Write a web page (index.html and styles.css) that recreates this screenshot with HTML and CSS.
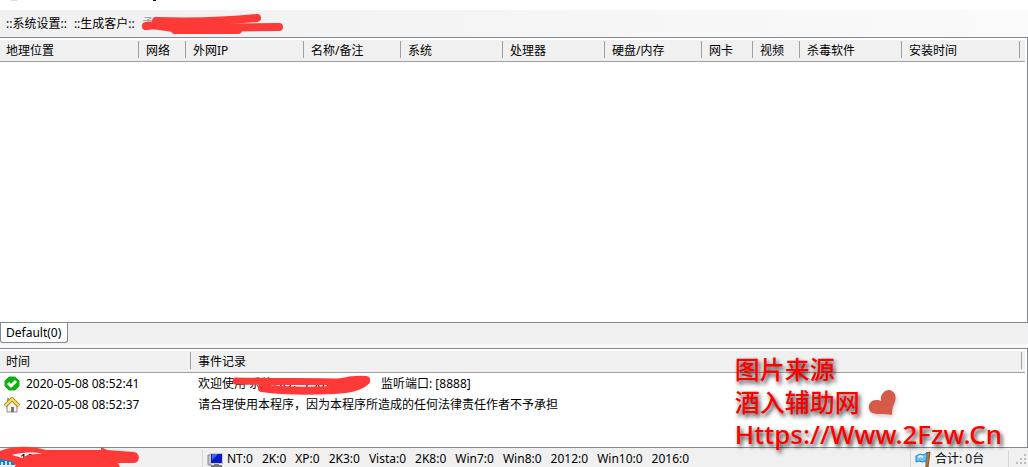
FILE: index.html
```html
<!DOCTYPE html>
<html lang="zh-CN">
<head>
    <meta charset="UTF-8">
    <meta name="viewport" content="width=device-width, initial-scale=1.0">
    <title>主机列表</title>
    <link rel="stylesheet" href="styles.css">
</head>
<body>
    <div class="titlebar">
        <svg class="title-edge" width="160" height="3" viewBox="0 0 160 3" aria-hidden="true">
            <path d="M11 0h6" stroke="#bbb"/>
            <path d="M153 0h3" stroke="#111" stroke-width="2"/>
        </svg>
    </div>
    <nav class="menu">
        <button type="button">::系统设置::</button>
        <button type="button">::生成客户::</button>
        <span class="menu-hidden">孟
            <svg class="scribble scribble-menu" width="142" height="22" viewBox="0 0 142 22" aria-hidden="true">
                <path d="M14 7 C45 8 85 7 115 4" stroke-width="8"/>
                <path d="M4 12 C16 10 24 14 34 14 L137 13" stroke-width="8"/>
                <path d="M33 16 L96 16" stroke-width="8"/>
            </svg>
        </span>
    </nav>

    <main class="list hosts">
        <table>
            <colgroup>
                <col class="w139"><col class="w47"><col class="w118"><col class="w97"><col class="w102"><col class="w102">
                <col class="w97"><col class="w51"><col class="w47"><col class="w102"><col class="w118"><col>
            </colgroup>
            <thead>
                <tr>
                    <th>地理位置</th>
                    <th>网络</th>
                    <th>外网IP</th>
                    <th>名称/备注</th>
                    <th>系统</th>
                    <th>处理器</th>
                    <th>硬盘/内存</th>
                    <th>网卡</th>
                    <th>视频</th>
                    <th>杀毒软件</th>
                    <th>安装时间</th>
                    <td></td>
                </tr>
            </thead>
        </table>
    </main>

    <div class="tabs">
        <button type="button" class="tab">Default(0)</button>
    </div>

    <section class="list events">
        <table>
            <colgroup>
                <col class="w191"><col><col class="w3">
            </colgroup>
            <thead>
                <tr>
                    <th>时间</th>
                    <th>事件记录</th>
                    <td></td>
                </tr>
            </thead>
            <tbody>
                <tr>
                    <td>
                        <div class="time">
                            <svg width="16" height="16" viewBox="0 0 16 16" aria-hidden="true">
                                <path d="M5 1h6l4 4v5l-4 4H5l-4-4V5z" fill="#0db30d" stroke="#0db30d" stroke-linejoin="round"/>
                                <path d="M4 7l3 3 5-5" fill="none" stroke="#fff" stroke-width="3"/>
                            </svg>
                            2020-05-08 08:52:41
                        </div>
                    </td>
                    <td>
                        <div class="message">
                            <span class="account">欢迎使用 系统QQ：75876 95
                                <svg class="scribble scribble-account" width="142" height="22" viewBox="0 0 142 22" aria-hidden="true">
                                    <path d="M4 8 C40 9 80 8 108 9" stroke-width="7"/>
                                    <path d="M30 15 C50 18 80 18 102 17 C118 16 128 14 134 8" stroke-width="8"/>
                                    <path d="M100 11 C115 8 122 6 134 7" stroke-width="8"/>
                                </svg>
                            </span>
                            <span>监听端口: [8888]</span>
                        </div>
                    </td>
                    <td></td>
                </tr>
                <tr>
                    <td>
                        <div class="time">
                            <svg width="16" height="16" viewBox="0 0 16 16" aria-hidden="true">
                                <path d="M3 8v7h10V8L8 4z" fill="#f4f4f4" stroke="#8a8a8a"/>
                                <path d="M7 10h3v5H7z" fill="#777"/>
                                <path d="M3 1h2v4H3z" fill="#999"/>
                                <path d="M1 9l7-7 7 7" fill="none" stroke="#a88a24" stroke-width="4"/>
                                <path d="M1 9l7-7 7 7" fill="none" stroke="#f7dd6a" stroke-width="2"/>
                            </svg>
                            2020-05-08 08:52:37
                        </div>
                    </td>
                    <td>请合理使用本程序，因为本程序所造成的任何法律责任作者不予承担</td>
                    <td></td>
                </tr>
            </tbody>
        </table>
    </section>

    <footer class="status">
        <div class="status-address">
            <svg width="16" height="16" viewBox="0 0 16 16" aria-hidden="true">
                <path d="M0 8h15v6H0z" fill="#1583c5"/>
                <path d="M1 11h2v3H1zM5 10h2v4H5zM9 11h2v3H9z" fill="#b9e6ff"/>
            </svg>
            192
            <svg class="scribble scribble-address" width="142" height="22" viewBox="0 0 142 22" aria-hidden="true">
                <path d="M0 6 C14 0 34 1 46 5 L101 5 L101 2 L107 5 L134 7 C141 8 140 18 134 18 L118 18 L120 22 L15 22 C18 17 8 15 0 14 Z M12 10 L22 13 C27 9 34 9 42 9 C34 6 18 8 12 10 Z" fill="#fd3a37" fill-rule="evenodd" stroke="none"/>
            </svg>
        </div>
        <div class="status-systems">
            <svg width="16" height="16" viewBox="0 0 16 16" aria-hidden="true">
                <path d="M1 4h3v10H1z" fill="#c4c4c4" stroke="#888"/>
                <path d="M3 2h13v11H3z" fill="#c9c9c9"/>
                <path d="M4 3h11v9H4z" fill="#0a1ac4"/>
                <path d="M5 3h6L5 9z" fill="#4668f4"/>
                <path d="M7 13h5v1h3v2H4v-2h3z" fill="#777"/>
            </svg>
            <span>NT:0</span>
            <span>2K:0</span>
            <span>XP:0</span>
            <span>2K3:0</span>
            <span>Vista:0</span>
            <span>2K8:0</span>
            <span>Win7:0</span>
            <span>Win8:0</span>
            <span>2012:0</span>
            <span>Win10:0</span>
            <span>2016:0</span>
        </div>
        <div class="status-total">
            <svg width="16" height="16" viewBox="0 0 16 16" aria-hidden="true">
                <path d="M11 2l4-1-2 15h-2z" fill="#b87931" stroke="#85511d"/>
                <path d="M1 5l4-2 3 1 4-2-1 8-4 1-3-1-3 1z" fill="#6bc3f5" stroke="#1e86cf"/>
                <path d="M3 6l3-1 2 1" fill="none" stroke="#d5f3ff" stroke-width="2"/>
            </svg>
            <span>合计: 0台</span>
        </div>
        <div class="status-grip">
            <svg width="12" height="12" viewBox="0 0 12 12" aria-hidden="true">
                <path d="M8 1h2v2H8zM4 5h2v2H4zM8 5h2v2H8zM0 9h2v2H0zM4 9h2v2H4zM8 9h2v2H8z" fill="#bcbcbc"/>
            </svg>
        </div>
    </footer>

    <div class="watermark">
        <div>图片来源</div>
        <div class="watermark-name">酒入辅助网
            <svg width="28" height="28" viewBox="0 0 28 28" aria-hidden="true">
                <path d="M24 26 C17 24 10 26 4 24 C-2 20 1 11 8 11 C10 11 12 11 13 12 C12 6 16 1 21 1 C28 2 29 9 26 15 C24 19 24 23 24 26Z" fill="#d65a4a"/>
            </svg>
        </div>
        <div class="watermark-url">Https://Www.2Fzw.Cn</div>
    </div>
</body>
</html>
```

FILE: styles.css
```css
* {
    box-sizing: border-box;
}
body {
    display: flex;
    flex-direction: column;
    position: relative;
    min-height: 100vh;
    margin: 0;
    background: #f0f0f0;
    color: #000;
    font-family: "Noto Sans", "Noto Sans CJK SC", sans-serif;
    font-size: 12px;
    line-height: 16px;
    white-space: nowrap;
    overflow: hidden;
}
svg {
    flex: none;
}
button {
    padding: 0;
    border: 0;
    background: none;
    color: inherit;
    font: inherit;
}
.titlebar {
    height: 10px;
    background: #fff;
}
.title-edge {
    display: block;
}

/* menu */
.menu {
    display: flex;
    align-items: center;
    gap: 7px;
    height: 27px;
    padding-left: 6px;
    background: linear-gradient(to right, #f0f0f0, #fafafa);
}
.menu-hidden {
    position: relative;
    color: #999;
}

/* red strokes over private text */
.scribble {
    position: absolute;
    fill: none;
    stroke: #fd3a37;
    stroke-linecap: round;
}
.scribble-menu {
    left: 0;
    top: -2px;
}
.scribble-account {
    left: 34px;
    top: -3px;
}
.scribble-address {
    left: 0;
    bottom: 0;
}

/* list views */
.list {
    padding: 2px 2px 0 0;
    border: 1px solid #828790;
    border-left: 0;
    background: #fff;
}
.hosts {
    flex: 1;
}
.events {
    height: 100px;
}
table {
    width: 100%;
    table-layout: fixed;
    border-collapse: separate;
    border-spacing: 0;
}
th, td {
    padding: 0 0 0 7px;
    font-weight: normal;
    text-align: left;
}
th:first-child, td:first-child {
    padding-left: 6px;
}
thead tr {
    height: 22px;
    background: #f0f0f0;
}
thead th, thead td {
    border-bottom: 1px solid #a0a0a0;
}
thead th {
    background: linear-gradient(#a0a0a0, #a0a0a0) right 1px / 1px 17px no-repeat;
}
tbody tr {
    height: 21px;
}
.w3 { width: 3px; }
.w47 { width: 47px; }
.w51 { width: 51px; }
.w97 { width: 97px; }
.w102 { width: 102px; }
.w118 { width: 118px; }
.w139 { width: 139px; }
.w191 { width: 191px; }
.time {
    display: flex;
    align-items: center;
    gap: 6px;
    margin-left: -2px;
}
.message {
    display: flex;
}
.account {
    position: relative;
    width: 183px;
}

/* group tabs */
.tabs {
    height: 25px;
    background: linear-gradient(#f0f0f0 21px, #f8f8f8 21px);
}
.tab {
    display: block;
    height: 20px;
    padding: 0 6px 0 5px;
    border: 1px solid #828790;
    border-top: 0;
    border-radius: 0 0 3px 3px;
    background: #fff;
}

/* status bar */
.status {
    display: flex;
    height: 19px;
    padding-top: 2px;
}
.status > div {
    display: flex;
    align-items: center;
}
.status-address {
    position: relative;
    width: 202px;
    gap: 4px;
}
.status-systems {
    flex: 1;
    gap: 9px;
}
.status-systems, .status-total, .status-grip {
    padding-left: 4px;
    border-left: 1px solid #d7d7d7;
}
.status-systems svg {
    margin-right: -5px;
}
.status-total {
    width: 98px;
    gap: 4px;
}
.status-grip {
    width: 20px;
    justify-content: flex-end;
}

/* source mark */
.watermark {
    position: absolute;
    right: 26px;
    bottom: 18px;
    color: #f00;
    font-size: 25px;
    line-height: 33px;
    font-weight: 500;
    text-shadow: 2px 3px 4px rgba(0, 0, 0, 0.8);
    pointer-events: none;
}
.watermark-name {
    display: flex;
    align-items: center;
    gap: 8px;
}
.watermark-url {
    font-size: 26px;
    line-height: 30px;
}
.watermark svg {
    filter: drop-shadow(1px 2px 2px rgba(0, 0, 0, 0.2));
}
```
